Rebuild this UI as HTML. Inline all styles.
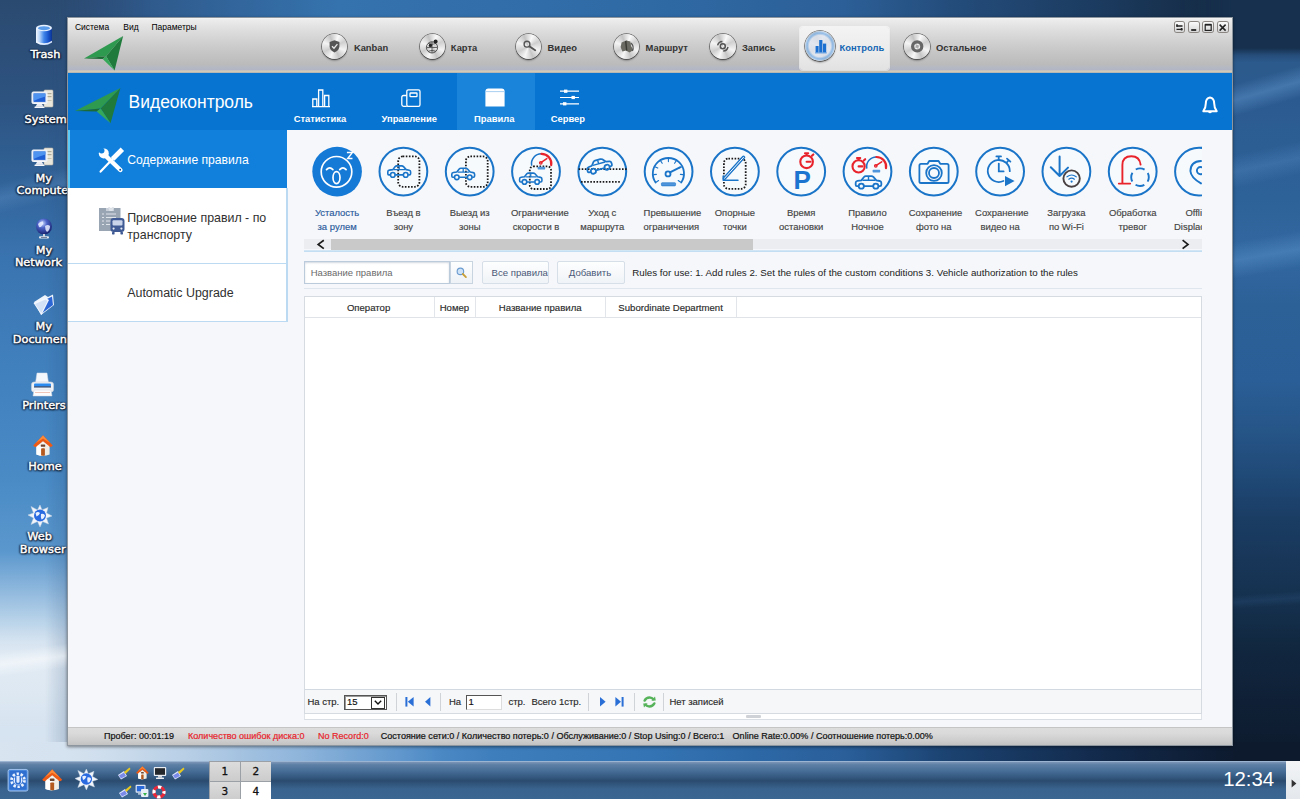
<!DOCTYPE html>
<html lang="ru"><head><meta charset="utf-8"><title>Видеоконтроль</title>
<style>
html,body{margin:0;padding:0;}
body{width:1300px;height:799px;overflow:hidden;position:relative;background:#2f5f95;font-family:"Liberation Sans",sans-serif;}
.a{position:absolute;}
.t{position:absolute;white-space:nowrap;}
svg{position:absolute;overflow:visible;}
.dl{position:absolute;white-space:nowrap;text-align:center;color:#fff;font-family:"DejaVu Sans",sans-serif;font-size:12px;line-height:13px;text-shadow:0 0 1.5px #101c30,0 0 2px #101c30,0 1px 2px #101c30,1px 1px 2px #101c30,-1px 0 2px #101c30;-webkit-text-stroke:0.45px #fff;}
.tb{position:absolute;width:26px;height:26px;border-radius:50%;background:radial-gradient(circle at 50% 45%,#f6f6f6 0%,#e2e2e2 35%,#c9c9c9 60%,#efefef 78%,#9d9d9d 100%);box-shadow:0 0 0 1px #8c8c8c,0 2px 2px rgba(0,0,0,.35);}
.tbt{position:absolute;white-space:nowrap;font-weight:bold;color:#333;font-size:9.4px;line-height:12px;}
.il{position:absolute;width:80px;text-align:center;font-size:9.45px;line-height:14px;color:#444;white-space:nowrap;-webkit-text-stroke:0.15px currentColor;}
.ic{position:absolute;width:46px;height:46px;border-radius:50%;border:2px solid #1670c4;background:#f6f9fc;box-sizing:content-box;}
.st{position:absolute;white-space:nowrap;font-size:9.04px;line-height:12px;color:#111;top:729.8px;-webkit-text-stroke:0.2px currentColor;}
.pg{position:absolute;white-space:nowrap;font-size:9.5px;line-height:12px;color:#2a2a2a;top:696.3px;-webkit-text-stroke:0.15px currentColor;}
.sep{position:absolute;width:1px;background:#d0d4d8;top:693px;height:18px;}
.th{position:absolute;white-space:nowrap;font-size:9.6px;line-height:12px;color:#2a2a2a;top:302px;text-align:center;-webkit-text-stroke:0.15px currentColor;}
</style></head><body>
<div class="a" style="left:0;top:0;width:1300px;height:799px;background:linear-gradient(90deg,#2a4870 0%,#2e5484 8%,#3573ae 26%,#2f6aa5 50%,#2c5f97 65%,#244d7c 73%,#1b3a5e 85%,#14283f 95%,#12233a 100%);"></div>
<div class="a" style="left:0;top:0;width:150px;height:762px;-webkit-mask-image:linear-gradient(90deg,#000 0,#000 45px,transparent 150px);mask-image:linear-gradient(90deg,#000 0,#000 45px,transparent 150px);background:linear-gradient(180deg,#2b4a70 0%,#2d5380 13%,#316399 24%,#3a74b0 34%,#4080bd 48%,#4a8bc6 63%,#5a97cd 72.3%,#8ab5dc 77%,#bcd5ea 81.8%,#d5e3f0 84.1%,#e2ebf4 86.4%,#dde8f2 91%,#d6e3f0 95.8%,#d8e4f0 100%);"></div>
<div class="a" style="left:1180px;top:0;width:120px;height:762px;-webkit-mask-image:linear-gradient(90deg,transparent 0,#000 52px,#000 120px);mask-image:linear-gradient(90deg,transparent 0,#000 52px,#000 120px);background:linear-gradient(180deg,#16304e 0%,#16304e 6.3%,#264e7c 7.3%,#2c5a8c 8.2%,#2b5a90 13%,#2d6298 26%,#3268a0 33%,#2c6198 40%,#2a5e96 50%,#265588 56.4%,#1f4875 63%,#1a3d64 68%,#183658 73.5%,#15314f 78.7%,#11273f 85%,#0f2036 92%,#0d1a2c 100%);"></div>
<div class="a" style="left:0;top:742px;width:1300px;height:20px;background:linear-gradient(90deg,#d8e4f0 0%,#d5e2ef 5%,#cfdeed 8%,#b5cde5 15%,#8fb5db 23%,#5f96cc 31%,#4a88c4 34%,#3f7ebc 38%,#3474b4 50%,#2d68a6 58%,#2a5f9a 65%,#1b4270 73%,#12294a 85%,#0d1a2e 95%,#0d1a2e 100%);"></div>

<div class="a" style="left:1232px;top:58px;width:68px;height:70px;background:linear-gradient(164deg,rgba(110,165,220,0) 30%,rgba(110,165,220,.38) 48%,rgba(110,165,220,0) 66%);"></div>
<div class="a" style="left:1232px;top:130px;width:68px;height:70px;background:linear-gradient(168deg,rgba(110,165,220,0) 30%,rgba(110,165,220,.22) 50%,rgba(110,165,220,0) 70%);"></div>
<div class="a" style="left:1232px;top:215px;width:68px;height:80px;background:linear-gradient(170deg,rgba(110,165,220,0) 30%,rgba(110,165,220,.32) 50%,rgba(110,165,220,0) 70%);"></div>
<div class="a" style="left:1232px;top:585px;width:68px;height:30px;background:linear-gradient(176deg,rgba(70,120,180,0) 30%,rgba(70,120,180,.14) 50%,rgba(70,120,180,0) 70%);"></div>
<div class="a" style="left:0;top:640px;width:68px;height:40px;background:linear-gradient(172deg,rgba(255,255,255,0) 25%,rgba(255,255,255,.45) 50%,rgba(255,255,255,0) 75%);"></div>
<div class="a" style="left:0;top:160px;width:68px;height:60px;background:linear-gradient(166deg,rgba(120,170,220,0) 30%,rgba(120,170,220,.22) 50%,rgba(120,170,220,0) 70%);"></div>

<div class="dl" style="left:0.5px;width:90px;top:48.4px;font-size:11.3px;">Trash</div>
<div class="dl" style="left:0.7000000000000028px;width:90px;top:113.0px;font-size:11.3px;">System</div>
<div class="dl" style="left:-1.2999999999999972px;width:90px;top:172.2px;font-size:11.3px;">My</div>
<div class="dl" style="left:-0.29999999999999716px;width:90px;top:184.4px;font-size:11.3px;">Computer</div>
<div class="dl" style="left:-1.0px;width:90px;top:243.5px;font-size:11.3px;">My</div>
<div class="dl" style="left:-6.5px;width:90px;top:255.7px;font-size:11.3px;">Network</div>
<div class="dl" style="left:-1.2000000000000028px;width:90px;top:319.9px;font-size:11.3px;">My</div>
<div class="dl" style="left:0.0px;width:90px;top:332.5px;font-size:11.3px;">Documents</div>
<div class="dl" style="left:-1.1000000000000014px;width:90px;top:398.8px;font-size:11.3px;">Printers</div>
<div class="dl" style="left:0.0px;width:90px;top:460.3px;font-size:11.3px;">Home</div>
<div class="dl" style="left:-5.399999999999999px;width:90px;top:529.8px;font-size:11.3px;">Web</div>
<div class="dl" style="left:-2.299999999999997px;width:90px;top:542.6px;font-size:11.3px;">Browser</div>
<svg style="left:34.5px;top:23.5px" width="18" height="23" viewBox="0 0 18 23">
<defs><linearGradient id="tr1" x1="0" x2="1"><stop offset="0" stop-color="#f4f9ff"/><stop offset=".22" stop-color="#b9d6fb"/><stop offset=".5" stop-color="#3f84ea"/><stop offset=".8" stop-color="#1650c8"/><stop offset="1" stop-color="#0c3490"/></linearGradient></defs>
<path d="M1 4 V18.5 Q9 23.5 17 18.5 V4 Z" fill="url(#tr1)"/>
<ellipse cx="9" cy="4" rx="8" ry="3.2" fill="#e8f2ff"/>
<ellipse cx="9" cy="4.2" rx="6" ry="2" fill="#5a9cea"/>
<path d="M1 16.8 Q9 21.8 17 16.8 V18.6 Q9 23.6 1 18.6 Z" fill="#f0f6ff" opacity=".9"/>
</svg>
<svg style="left:31px;top:89px" width="24" height="20" viewBox="0 0 24 20">
<rect x="13" y="1" width="9" height="17" rx="1" fill="#e9e6dc" stroke="#b9b4a4" stroke-width=".6"/>
<rect x="14.5" y="4" width="6" height="1.2" fill="#b0aa98"/><rect x="14.5" y="7" width="6" height="1.2" fill="#b0aa98"/><rect x="14.5" y="11" width="6" height="1" fill="#c8c2b0"/>
<rect x="1" y="3" width="15" height="11.5" rx="1.2" fill="#dfe6f2" stroke="#f6f8fc" stroke-width="1"/>
<rect x="2.6" y="4.5" width="11.8" height="8.4" fill="#1f5fd6"/>
<path d="M2.6 4.5 h11.8 v3 Q8 9 2.6 12 Z" fill="#4f93f0"/>
<path d="M6 15 h5 l1.5 2.8 h-8 Z" fill="#e8ecf2"/>
<rect x="3.5" y="17.6" width="10" height="1.4" rx=".6" fill="#f4f6fa"/>
</svg>
<svg style="left:30.5px;top:147px" width="24" height="20" viewBox="0 0 24 20">
<rect x="13" y="1" width="9" height="17" rx="1" fill="#e9e6dc" stroke="#b9b4a4" stroke-width=".6"/>
<rect x="14.5" y="4" width="6" height="1.2" fill="#b0aa98"/><rect x="14.5" y="7" width="6" height="1.2" fill="#b0aa98"/><rect x="14.5" y="11" width="6" height="1" fill="#c8c2b0"/>
<rect x="1" y="3" width="15" height="11.5" rx="1.2" fill="#dfe6f2" stroke="#f6f8fc" stroke-width="1"/>
<rect x="2.6" y="4.5" width="11.8" height="8.4" fill="#1f5fd6"/>
<path d="M2.6 4.5 h11.8 v3 Q8 9 2.6 12 Z" fill="#4f93f0"/>
<path d="M6 15 h5 l1.5 2.8 h-8 Z" fill="#e8ecf2"/>
<rect x="3.5" y="17.6" width="10" height="1.4" rx=".6" fill="#f4f6fa"/>
</svg>
<svg style="left:34px;top:218px" width="20" height="22" viewBox="0 0 20 22">
<defs><radialGradient id="gl1" cx=".4" cy=".3" r=".8"><stop offset="0" stop-color="#c8d8ff"/><stop offset=".35" stop-color="#4b63c8"/><stop offset="1" stop-color="#10185e"/></radialGradient></defs>
<circle cx="10" cy="8.5" r="8" fill="url(#gl1)"/>
<path d="M4 6 Q6 3 9 3.5 Q10 6 8 7.5 Q7 10 5 9 Z M11 8 Q14 6 16 8 Q16 12 13 14 Q11 12 11 8 Z" fill="#e6ecff" opacity=".85"/>
<rect x="9" y="16" width="2" height="2.5" fill="#d0d4dc"/><rect x="5" y="18.3" width="10" height="2.2" rx="1" fill="#e4e8ee"/><rect x="7" y="19" width="6" height=".8" fill="#5a6a8a"/>
</svg>
<svg style="left:32px;top:293px" width="24" height="24" viewBox="0 0 24 24">
<path d="M2 9 L13 2 L16 4 L21 1.5 L22 12 L9 22 Z" fill="#eef4fc"/>
<path d="M5 11 L20 3.5 L21 12 L9 21 Z" fill="#2b66d4"/>
<path d="M1.5 10 L14 5 L17 7 L9.5 22 Z" fill="#f4f8fe"/>
<path d="M3 11 L13.5 6.5 L15.5 8 L9.3 20 Z" fill="#d3e2f6"/>
</svg>
<svg style="left:30px;top:372px" width="25" height="26" viewBox="0 0 25 26">
<path d="M7 1 h10 l1.5 10 h-13 Z" fill="#f4f7fb" stroke="#d5dde8" stroke-width=".5"/>
<rect x="1.5" y="10" width="22" height="10" rx="2.5" fill="#eef1f5" stroke="#c9d0da" stroke-width=".6"/>
<rect x="4" y="11.5" width="17" height="3" rx="1" fill="#2a8af0"/>
<rect x="4" y="14.3" width="17" height="1.2" fill="#203a66"/>
<path d="M4 18 h17 l1 6 h-19 Z" fill="#fbfcfe" stroke="#d0d6e0" stroke-width=".5"/>
<rect x="5" y="20" width="15" height="1" fill="#e9a08a" opacity=".6"/>
</svg>
<svg style="left:33px;top:434.5px" width="20.0" height="22.0" viewBox="0 0 20 22">
<path d="M3.4 10 H16.6 V19.6 Q10 22 3.4 19.6 Z" fill="#f1eee6"/>
<path d="M3.4 10 H10 V21 Q6 20.8 3.4 19.6 Z" fill="#ffffff"/>
<path d="M10 0.3 L19.8 10.6 Q18.6 12.4 16.8 11.8 L10 6.4 L3.2 11.8 Q1.4 12.4 0.2 10.6 Z" fill="#ee5a14"/>
<path d="M10 0.6 L17 8 L10 3.6 L3 8 Z" fill="#fa8c3c"/>
<path d="M10 6.2 L15.6 10.8 H4.4 Z" fill="#f6f3ec"/>
<rect x="8.1" y="13.2" width="3.8" height="7.6" rx=".8" fill="#b45a1e"/>
<rect x="7.8" y="9.4" width="4.4" height="2.4" rx=".6" fill="#6e4630"/>
</svg>
<svg style="left:27.5px;top:504.5px" width="24.0" height="22.0" viewBox="0 0 24 22">
<path d="M12 0 L14 5 L20 2.5 L18.5 8 L24 11 L18.5 13 L20.5 19 L14.5 16.5 L12 22 L9.5 16.5 L3 19.5 L5.5 13 L0 10 L5.5 8 L3 1.5 L9.5 5 Z" fill="#f2f6fb" stroke="#c6d2e2" stroke-width=".5"/>
<circle cx="12" cy="10.5" r="6" fill="#2a6ae0"/>
<path d="M7.5 8 Q10 6 12 8 Q11 11 8.5 11.5 Z M13 9 Q16 8 17 10.5 Q16 14 13.5 14.5 Q12.5 12 13 9 Z" fill="#e8f0ff"/>
</svg>
<div class="a" style="left:67px;top:17px;width:1166px;height:729px;background:#8d959e;box-shadow:0 1px 3px rgba(0,0,0,.45);"></div>
<div class="a" style="left:68px;top:18px;width:1164px;height:727px;background:#f5f7fa;"></div>
<div class="a" style="left:68px;top:18px;width:1164px;height:55px;background:linear-gradient(180deg,#f6f6f6 0%,#ececec 3.5%,#e6e6e6 11%,#dedede 22%,#d0d0d0 44%,#c6c6c6 62%,#bbbbbb 84%,#b6b9c2 89%,#b2b6c4 94%,#d4cbb9 96.5%,#cfc6b4 98.5%,#8fa0b8 100%);"></div>
<div class="t" style="left:74.9px;top:21.90px;font-size:8.5px;line-height:11px;color:#000;font-weight:normal;font-family:"Liberation Sans", sans-serif;">Система</div>
<div class="t" style="left:123.3px;top:21.90px;font-size:8.5px;line-height:11px;color:#000;font-weight:normal;font-family:"Liberation Sans", sans-serif;">Вид</div>
<div class="t" style="left:151.4px;top:21.90px;font-size:8.5px;line-height:11px;color:#000;font-weight:normal;font-family:"Liberation Sans", sans-serif;">Параметры</div>
<svg style="left:84.3px;top:35.8px" width="39.1" height="34.5" viewBox="0 0 46 36" preserveAspectRatio="none">
<path d="M46 0 L0 23.5 L26 21 Z" fill="#2e9a50"/>
<path d="M46 0 L26 21 L36 36 Z" fill="#1f7a3c"/>
<path d="M0 23.5 L26 21 L22 24 Z" fill="#1c6a34"/>
<path d="M26 21 L36 36 L22 24 Z" fill="#35a85a"/>
</svg>
<div class="a" style="left:799.5px;top:26.5px;width:89.5px;height:43px;border-radius:3px;background:linear-gradient(180deg,#f3f3f3,#ebebeb 60%,#e2e2e2);box-shadow:0 0 0 1px rgba(255,255,255,.6),0 1px 2px rgba(0,0,0,.18);"></div>
<div class="a" style="left:321.7px;top:33.7px;width:25.6px;height:25.6px;border-radius:50%;background:radial-gradient(circle at 50% 50%,rgba(255,255,255,.0) 0%,rgba(255,255,255,0) 70%,rgba(255,255,255,.85) 80%,rgba(150,150,150,.9) 93%,rgba(110,110,110,1) 100%),conic-gradient(from 20deg,#fafafa,#cfcfcf 12%,#f4f4f4 25%,#c6c6c6 38%,#f7f7f7 50%,#cdcdcd 62%,#f4f4f4 75%,#c4c4c4 88%,#fafafa);box-shadow:0 1.5px 2px rgba(0,0,0,.4),0 0 0 .7px rgba(90,90,90,.9);"></div>
<div class="tbt" style="left:353.9px;top:41.8px;">Kanban</div>
<div class="a" style="left:419.7px;top:33.7px;width:25.6px;height:25.6px;border-radius:50%;background:radial-gradient(circle at 50% 50%,rgba(255,255,255,.0) 0%,rgba(255,255,255,0) 70%,rgba(255,255,255,.85) 80%,rgba(150,150,150,.9) 93%,rgba(110,110,110,1) 100%),conic-gradient(from 20deg,#fafafa,#cfcfcf 12%,#f4f4f4 25%,#c6c6c6 38%,#f7f7f7 50%,#cdcdcd 62%,#f4f4f4 75%,#c4c4c4 88%,#fafafa);box-shadow:0 1.5px 2px rgba(0,0,0,.4),0 0 0 .7px rgba(90,90,90,.9);"></div>
<div class="tbt" style="left:450.8px;top:41.8px;">Карта</div>
<div class="a" style="left:515.9000000000001px;top:33.7px;width:25.6px;height:25.6px;border-radius:50%;background:radial-gradient(circle at 50% 50%,rgba(255,255,255,.0) 0%,rgba(255,255,255,0) 70%,rgba(255,255,255,.85) 80%,rgba(150,150,150,.9) 93%,rgba(110,110,110,1) 100%),conic-gradient(from 20deg,#fafafa,#cfcfcf 12%,#f4f4f4 25%,#c6c6c6 38%,#f7f7f7 50%,#cdcdcd 62%,#f4f4f4 75%,#c4c4c4 88%,#fafafa);box-shadow:0 1.5px 2px rgba(0,0,0,.4),0 0 0 .7px rgba(90,90,90,.9);"></div>
<div class="tbt" style="left:547.6px;top:41.8px;">Видео</div>
<div class="a" style="left:613.8000000000001px;top:33.7px;width:25.6px;height:25.6px;border-radius:50%;background:radial-gradient(circle at 50% 50%,rgba(255,255,255,.0) 0%,rgba(255,255,255,0) 70%,rgba(255,255,255,.85) 80%,rgba(150,150,150,.9) 93%,rgba(110,110,110,1) 100%),conic-gradient(from 20deg,#fafafa,#cfcfcf 12%,#f4f4f4 25%,#c6c6c6 38%,#f7f7f7 50%,#cdcdcd 62%,#f4f4f4 75%,#c4c4c4 88%,#fafafa);box-shadow:0 1.5px 2px rgba(0,0,0,.4),0 0 0 .7px rgba(90,90,90,.9);"></div>
<div class="tbt" style="left:645.6px;top:41.8px;">Маршрут</div>
<div class="a" style="left:710.2px;top:33.7px;width:25.6px;height:25.6px;border-radius:50%;background:radial-gradient(circle at 50% 50%,rgba(255,255,255,.0) 0%,rgba(255,255,255,0) 70%,rgba(255,255,255,.85) 80%,rgba(150,150,150,.9) 93%,rgba(110,110,110,1) 100%),conic-gradient(from 20deg,#fafafa,#cfcfcf 12%,#f4f4f4 25%,#c6c6c6 38%,#f7f7f7 50%,#cdcdcd 62%,#f4f4f4 75%,#c4c4c4 88%,#fafafa);box-shadow:0 1.5px 2px rgba(0,0,0,.4),0 0 0 .7px rgba(90,90,90,.9);"></div>
<div class="tbt" style="left:742px;top:41.8px;">Запись</div>
<div class="a" style="left:904.4000000000001px;top:33.7px;width:25.6px;height:25.6px;border-radius:50%;background:radial-gradient(circle at 50% 50%,rgba(255,255,255,.0) 0%,rgba(255,255,255,0) 70%,rgba(255,255,255,.85) 80%,rgba(150,150,150,.9) 93%,rgba(110,110,110,1) 100%),conic-gradient(from 20deg,#fafafa,#cfcfcf 12%,#f4f4f4 25%,#c6c6c6 38%,#f7f7f7 50%,#cdcdcd 62%,#f4f4f4 75%,#c4c4c4 88%,#fafafa);box-shadow:0 1.5px 2px rgba(0,0,0,.4),0 0 0 .7px rgba(90,90,90,.9);"></div>
<div class="tbt" style="left:936px;top:41.8px;">Остальное</div>
<div class="a" style="left:804.6999999999999px;top:30.599999999999998px;width:30.4px;height:30.4px;border-radius:50%;background:radial-gradient(circle at 50% 50%,rgba(255,255,255,.0) 0%,rgba(255,255,255,0) 72%,rgba(255,255,255,.85) 82%,rgba(150,150,150,.9) 93%,rgba(110,110,110,1) 100%),radial-gradient(circle at 50% 50%,rgba(222,228,238,.85) 0%,rgba(222,228,238,.8) 50%,rgba(130,178,228,.85) 60%,rgba(130,178,228,.6) 66%,rgba(130,178,228,0) 74%),conic-gradient(from 20deg,#fafafa,#cfcfcf 12%,#f4f4f4 25%,#c6c6c6 38%,#f7f7f7 50%,#cdcdcd 62%,#f4f4f4 75%,#c4c4c4 88%,#fafafa);box-shadow:0 1.5px 2px rgba(0,0,0,.4),0 0 0 .7px rgba(90,90,90,.9);"></div>
<div class="tbt" style="left:839.5px;top:41.8px;color:#1466b4;">Контроль</div>
<svg style="left:0;top:0" width="1300" height="80" viewBox="0 0 1300 80">
<path d="M334.5 40.2 L339.4 42 V46.6 Q339.2 50.4 334.5 52.6 Q329.8 50.4 329.6 46.6 V42 Z" fill="#555"/><path d="M332 46.2 L334 48.2 L337.4 44.2" fill="none" stroke="#e8e8e8" stroke-width="1.3"/>
<g fill="none" stroke="#555" stroke-width="1"><circle cx="432" cy="47.4" r="5.6"/><path d="M426.4 47.4 H437.6 M432 41.8 V53 M428 43.4 Q432 45.4 436 43.4 M428 51.4 Q432 49.4 436 51.4"/></g><circle cx="435.6" cy="41.6" r="2" fill="#222"/><circle cx="430.4" cy="45.4" r="1.7" fill="#222"/>
<g fill="none" stroke="#555"><circle cx="527" cy="44.2" r="2.9" stroke-width="1.4"/><path d="M529.4 46.4 L535.2 50.2" stroke-width="1.9" stroke-linecap="round"/></g>
<path d="M621.6 42.4 L626.4 40.6 L630.4 41.6 L631 46 L633.4 50 L629.6 52.4 L626 50.6 L622.4 51.6 L620.6 47 Z" fill="#6a6a62"/><path d="M626.4 40.6 L627.4 50.8 L626 50.6 L625 41.2Z" fill="#3a3a34"/><path d="M630.8 43 Q634.6 46 632.4 51" fill="none" stroke="#555" stroke-width="1.2"/>
<g fill="none" stroke="#555" stroke-width="1.5"><circle cx="722.8" cy="46.2" r="2.5"/><path d="M717.6 45.4 Q718.6 41.4 722.4 41.4 M728 47 Q727 51 723.2 51"/></g>
<g fill="#1a6fd0"><rect x="815.6" y="46" width="3" height="6.6"/><rect x="819.2" y="40" width="3.2" height="12.6"/><rect x="823" y="43.6" width="3.2" height="9"/></g><rect x="815" y="52.4" width="11.8" height="1" fill="#5a9ae0"/>
<circle cx="917.2" cy="46.4" r="4.6" fill="none" stroke="#666" stroke-width="3.2"/><circle cx="917.2" cy="46.4" r="1.6" fill="#aaa"/>
</svg>
<div class="a" style="left:1174.6px;top:22px;width:9.8px;height:10px;border-radius:2px;background:linear-gradient(180deg,#fafafa,#d6d6d6);box-shadow:0 0 0 1px #8a8580;"></div>
<div class="a" style="left:1188.9px;top:22px;width:9.8px;height:10px;border-radius:2px;background:linear-gradient(180deg,#fafafa,#d6d6d6);box-shadow:0 0 0 1px #8a8580;"></div>
<div class="a" style="left:1203.3px;top:22px;width:9.8px;height:10px;border-radius:2px;background:linear-gradient(180deg,#fafafa,#d6d6d6);box-shadow:0 0 0 1px #8a8580;"></div>
<div class="a" style="left:1217.8px;top:22px;width:9.8px;height:10px;border-radius:2px;background:linear-gradient(180deg,#fafafa,#d6d6d6);box-shadow:0 0 0 1px #8a8580;"></div>
<svg style="left:1174px;top:21.5px" width="55" height="11" viewBox="0 0 55 11">
<g stroke="#222" stroke-width="1.3" fill="none">
<path d="M2.5 4 h6 M2.5 7.3 h6"/><path d="M3 2.2 v2.5 M7.6 6 v2.6" stroke-width="1.6"/>
<path d="M17.2 8 h5" stroke-width="1.8"/>
<rect x="31.2" y="2.8" width="6" height="5.6" stroke-width="1.2"/><path d="M31 2.6 h6.4" stroke-width="1.6"/>
<path d="M45.6 2.6 L51.6 8.6 M51.6 2.6 L45.6 8.6" stroke-width="1.5"/>
</g></svg>
<div class="a" style="left:68px;top:73px;width:1164px;height:57px;background:#0874d1;"></div>
<div class="a" style="left:456.5px;top:73px;width:78px;height:57px;background:#1a83da;"></div>
<svg style="left:74.9px;top:87.5px" width="45.4" height="35.2" viewBox="0 0 46 36" preserveAspectRatio="none">
<path d="M46 0 L0 23.5 L26 21 Z" fill="#2e9a50"/>
<path d="M46 0 L26 21 L36 36 Z" fill="#1f7a3c"/>
<path d="M0 23.5 L26 21 L22 24 Z" fill="#1c6a34"/>
<path d="M26 21 L36 36 L22 24 Z" fill="#35a85a"/>
</svg>
<div class="t" style="left:128.6px;top:90.70px;font-size:17.45px;line-height:23px;color:#fff;font-weight:normal;font-family:"Liberation Sans", sans-serif;-webkit-text-stroke:0.65px #fff;">Видеоконтроль</div>
<div class="t" style="left:293.7px;top:112.60px;font-size:9.4px;line-height:12px;color:#fff;font-weight:bold;font-family:"Liberation Sans", sans-serif;">Статистика</div>
<div class="t" style="left:381.5px;top:112.60px;font-size:9.4px;line-height:12px;color:#fff;font-weight:bold;font-family:"Liberation Sans", sans-serif;">Управление</div>
<div class="t" style="left:474px;top:112.60px;font-size:9.4px;line-height:12px;color:#fff;font-weight:bold;font-family:"Liberation Sans", sans-serif;">Правила</div>
<div class="t" style="left:550.7px;top:112.60px;font-size:9.4px;line-height:12px;color:#fff;font-weight:bold;font-family:"Liberation Sans", sans-serif;">Сервер</div>
<svg style="left:311.5px;top:88.5px" width="18" height="18.5" viewBox="0 0 18 18.5"><g fill="none" stroke="#fff" stroke-width="1.3">
<path d="M0.8 17.6 V10 H4.8 V17.6 M6.6 17.6 V1 H10.8 V17.6 M12.6 17.6 V6.5 H16.8 V17.6 M0 17.7 H18"/></g></svg>
<svg style="left:400.5px;top:88.5px" width="20" height="18.5" viewBox="0 0 20 18.5"><g fill="none" stroke="#fff" stroke-width="1.3">
<rect x="5.8" y="0.8" width="13.2" height="16.6" rx="1.6"/><rect x="9" y="4" width="7" height="3.6" rx=".6"/>
<path d="M5.8 6.5 H2.6 Q.8 6.5 .8 8.3 V15.6 Q.8 17.4 2.6 17.4 H5.8"/></g></svg>
<svg style="left:485px;top:88px" width="20" height="19" viewBox="0 0 20 19">
<path d="M0.4 3.8 Q0.4 0.6 3.4 0.6 H16.6 Q19.6 0.6 19.6 3.8 V18.6 H0.4 Z" fill="#fff"/><path d="M0.4 3.6 H19.6" stroke="#9fcaf0" stroke-width=".9"/></svg>
<svg style="left:559.5px;top:89px" width="19" height="17" viewBox="0 0 19 17"><g fill="none" stroke="#fff" stroke-width="1.2">
<path d="M0 2.2 H19 M0 8.5 H19 M0 14.8 H19"/></g><g fill="#fff"><rect x="4" y="0.6" width="3.4" height="3.2"/><rect x="11.5" y="6.9" width="3.4" height="3.2"/><rect x="3" y="13.2" width="3.4" height="3.2"/></g></svg>
<svg style="left:1201.5px;top:96px" width="16" height="18.5" viewBox="0 0 16 18.5"><g fill="none" stroke="#fff" stroke-width="2" stroke-linejoin="round">
<path d="M8 1.4 Q3.8 2.2 3.8 7.5 Q3.8 12 1.3 15.2 H14.7 Q12.2 12 12.2 7.5 Q12.2 2.2 8 1.4 Z"/></g><path d="M6 16 Q8 18.6 10 16 Z" fill="#fff"/></svg>
<div class="a" style="left:68px;top:130px;width:218.8px;height:191.5px;background:#fff;"></div>
<div class="a" style="left:68px;top:130px;width:218.8px;height:58px;background:#1180dd;"></div>
<div class="a" style="left:68px;top:130px;width:2.4px;height:58px;background:#5ccaf6;"></div>
<div class="a" style="left:68px;top:263.3px;width:218.8px;height:1px;background:#bcdaf1;"></div>
<div class="a" style="left:68px;top:321px;width:219.3px;height:1px;background:#bcdaf1;"></div>
<div class="a" style="left:286px;top:188px;width:1.8px;height:134px;background:#bcdaf2;"></div>
<div class="t" style="left:127.2px;top:151.50px;font-size:12.15px;line-height:16px;color:#fff;font-weight:normal;font-family:"Liberation Sans", sans-serif;">Содержание правила</div>
<div class="t" style="left:127.2px;top:209.90px;font-size:12.4px;line-height:16px;color:#303030;font-weight:normal;font-family:"Liberation Sans", sans-serif;">Присвоение правил - по</div>
<div class="t" style="left:127.2px;top:227.40px;font-size:12.4px;line-height:16px;color:#303030;font-weight:normal;font-family:"Liberation Sans", sans-serif;">транспорту</div>
<div class="t" style="left:127.2px;top:285.10px;font-size:12.45px;line-height:16px;color:#303030;font-weight:normal;font-family:"Liberation Sans", sans-serif;">Automatic Upgrade</div>
<svg style="left:98px;top:146.5px" width="26.5" height="26.5" viewBox="0 0 26.5 26.5">
<g stroke="#fff" fill="none">
<path d="M24.4 2.2 L14.6 12" stroke-width="4.8"/>
<path d="M15 11.6 L2.6 24.6" stroke-width="2.2" stroke-linecap="round"/>
<path d="M8 9.2 L22.4 23" stroke-width="4.4" stroke-linecap="round"/>
</g>
<circle cx="5.8" cy="6.4" r="5" fill="#fff"/>
<circle cx="3.6" cy="3.6" r="2.9" fill="#1180dd"/>
<circle cx="22.2" cy="22.8" r="0.95" fill="#0b4f96"/>
</svg>
<svg style="left:98.5px;top:206.5px" width="26" height="28" viewBox="0 0 26 28">
<rect x="0" y="1" width="21.5" height="23" fill="#9aa5b4"/>
<path d="M7 1 h8 v3 h-8 Z" fill="#c9d0da"/><path d="M9 0 l2-0 1 2 1-2 2 0 -1.5 4 h-3 Z" fill="#dfe4ea"/>
<g stroke="#dfe4ea" stroke-width="1"><path d="M3 7 h2 M7 7 h10 M3 10.5 h2 M7 10.5 h10 M3 14 h2 M7 14 h5 M3 17.5 h2 M7 17.5 h4"/></g>
<rect x="11.5" y="11" width="14" height="14" rx="3" fill="#3f5a94"/>
<rect x="13.5" y="13.2" width="10" height="5.2" rx="1" fill="#c9d3ea"/>
<circle cx="14.6" cy="21.6" r="1.1" fill="#e6ebf6"/><circle cx="22.4" cy="21.6" r="1.1" fill="#e6ebf6"/>
<rect x="13" y="25" width="2.6" height="2.4" rx=".6" fill="#3f5a94"/><rect x="21.4" y="25" width="2.6" height="2.4" rx=".6" fill="#3f5a94"/>
</svg>
<div class="a" style="left:304px;top:140px;width:897.6px;height:113px;overflow:hidden;">
<svg style="left:0;top:0" width="898" height="112" viewBox="304 140 898 112">
<circle cx="337.1" cy="171.6" r="24.8" fill="#1579d6"/>
<circle cx="403.40000000000003" cy="171.6" r="23.9" fill="#f7fafd" stroke="#1a74c8" stroke-width="2"/>
<circle cx="469.70000000000005" cy="171.6" r="23.9" fill="#f7fafd" stroke="#1a74c8" stroke-width="2"/>
<circle cx="536.0" cy="171.6" r="23.9" fill="#f7fafd" stroke="#1a74c8" stroke-width="2"/>
<circle cx="602.3" cy="171.6" r="23.9" fill="#f7fafd" stroke="#1a74c8" stroke-width="2"/>
<circle cx="668.6" cy="171.6" r="23.9" fill="#f7fafd" stroke="#1a74c8" stroke-width="2"/>
<circle cx="734.9" cy="171.6" r="23.9" fill="#f7fafd" stroke="#1a74c8" stroke-width="2"/>
<circle cx="801.2" cy="171.6" r="23.9" fill="#f7fafd" stroke="#1a74c8" stroke-width="2"/>
<circle cx="867.5" cy="171.6" r="23.9" fill="#f7fafd" stroke="#1a74c8" stroke-width="2"/>
<circle cx="933.8" cy="171.6" r="23.9" fill="#f7fafd" stroke="#1a74c8" stroke-width="2"/>
<circle cx="1000.1" cy="171.6" r="23.9" fill="#f7fafd" stroke="#1a74c8" stroke-width="2"/>
<circle cx="1066.4" cy="171.6" r="23.9" fill="#f7fafd" stroke="#1a74c8" stroke-width="2"/>
<circle cx="1132.6999999999998" cy="171.6" r="23.9" fill="#f7fafd" stroke="#1a74c8" stroke-width="2"/>
<circle cx="1199.0" cy="171.6" r="23.9" fill="#f7fafd" stroke="#1a74c8" stroke-width="2"/>
<g fill="none" stroke="#fff" stroke-width="1.7" stroke-linecap="round"><circle cx="336.5" cy="171.8" r="15.3"/>
<path d="M326.5 169.6 q3.2 -3.6 6.4 0 M339.70000000000005 169.6 q3.2 -3.6 6.4 0"/><ellipse cx="336.5" cy="177.6" rx="3.5" ry="6"/></g>
<path d="M346.90000000000003 152.6 h5.4 l-4.6 6 h4.8" fill="none" stroke="#fff" stroke-width="1.5"/>
<rect x="398.2" y="156.4" width="21.2" height="30.4" rx="4.5" fill="none" stroke="#1a1a1a" stroke-width="1.8" stroke-dasharray="1.6 1.5"/>
<g transform="translate(387.2 165.2) scale(1.0 1.008)" fill="none" stroke="#1a74c8" stroke-width="1.6" stroke-linejoin="round">
<path d="M3.2 9.6 H1.6 Q0.6 9.6 0.6 8.4 V6.6 Q0.6 5.2 2.2 4.9 L5.6 4.4 L8 1.4 Q8.6 0.7 9.6 0.7 H14.6 Q15.6 0.7 16.3 1.4 L19 4.4 L22 5 Q23.4 5.3 23.4 6.6 V8.4 Q23.4 9.6 22.2 9.6 H21 M8 9.6 H16"/>
<path d="M6.6 4.4 H18 M12 1 V4.4" stroke-width="1.2800000000000002"/>
<circle cx="5.6" cy="9.6" r="2.3"/><circle cx="18.5" cy="9.6" r="2.3"/></g>
<rect x="465.9" y="156.4" width="21.8" height="30.4" rx="4.5" fill="none" stroke="#1a1a1a" stroke-width="1.8" stroke-dasharray="1.6 1.5"/>
<g transform="translate(451.2 167.6) scale(1.0 1.008)" fill="none" stroke="#1a74c8" stroke-width="1.6" stroke-linejoin="round">
<path d="M3.2 9.6 H1.6 Q0.6 9.6 0.6 8.4 V6.6 Q0.6 5.2 2.2 4.9 L5.6 4.4 L8 1.4 Q8.6 0.7 9.6 0.7 H14.6 Q15.6 0.7 16.3 1.4 L19 4.4 L22 5 Q23.4 5.3 23.4 6.6 V8.4 Q23.4 9.6 22.2 9.6 H21 M8 9.6 H16"/>
<path d="M6.6 4.4 H18 M12 1 V4.4" stroke-width="1.2800000000000002"/>
<circle cx="5.6" cy="9.6" r="2.3"/><circle cx="18.5" cy="9.6" r="2.3"/></g>
<rect x="529.8" y="166.4" width="21.2" height="22.6" rx="3.5" fill="none" stroke="#1a1a1a" stroke-width="1.8" stroke-dasharray="1.6 1.5"/>
<g fill="none" stroke-width="1.5" stroke-linecap="round">
<path d="M531.6 165.1 A9.8 9.8 0 0 1 541.4 153.79999999999998" stroke="#1a74c8"/>
<path d="M541.4 153.79999999999998 A9.8 9.8 0 0 1 551.1999999999999 165.1" stroke="#e8232b" stroke-width="2.2"/>
<path d="M540.9 162.6 L546.79 158.7" stroke="#e8232b" stroke-width="1.6"/><circle cx="540.8" cy="162.79999999999998" r="1.3" stroke="#e8232b" stroke-width="1.2"/>
</g><rect x="537.6" y="166.79999999999998" width="7.6" height="2.6" rx=".6" fill="#4f95dc"/>
<g transform="translate(519 172.4) scale(0.9791666666666666 0.992)" fill="none" stroke="#1a74c8" stroke-width="1.6" stroke-linejoin="round">
<path d="M3.2 9.6 H1.6 Q0.6 9.6 0.6 8.4 V6.6 Q0.6 5.2 2.2 4.9 L5.6 4.4 L8 1.4 Q8.6 0.7 9.6 0.7 H14.6 Q15.6 0.7 16.3 1.4 L19 4.4 L22 5 Q23.4 5.3 23.4 6.6 V8.4 Q23.4 9.6 22.2 9.6 H21 M8 9.6 H16"/>
<path d="M6.6 4.4 H18 M12 1 V4.4" stroke-width="1.2800000000000002"/>
<circle cx="5.6" cy="9.6" r="2.3"/><circle cx="18.5" cy="9.6" r="2.3"/></g>
<path d="M578.6 169.2 H627 M581 181.9 H621" stroke="#1a1a1a" stroke-width="1.8" stroke-dasharray="1.6 1.5" fill="none"/>
<g transform="rotate(-16 599 166) translate(586 159) scale(1.1041666666666667 1.088)" fill="none" stroke="#1a74c8" stroke-width="1.6" stroke-linejoin="round">
<path d="M3.2 9.6 H1.6 Q0.6 9.6 0.6 8.4 V6.6 Q0.6 5.2 2.2 4.9 L5.6 4.4 L8 1.4 Q8.6 0.7 9.6 0.7 H14.6 Q15.6 0.7 16.3 1.4 L19 4.4 L22 5 Q23.4 5.3 23.4 6.6 V8.4 Q23.4 9.6 22.2 9.6 H21 M8 9.6 H16"/>
<path d="M6.6 4.4 H18 M12 1 V4.4" stroke-width="1.2800000000000002"/>
<circle cx="5.6" cy="9.6" r="2.3"/><circle cx="18.5" cy="9.6" r="2.3"/></g>
<g fill="none" stroke="#1a74c8" stroke-width="1.8" stroke-linecap="round"><path d="M655.6 182.5 A15.6 15.6 0 1 1 681.2 182.5"/>
<path d="M656.4 182.0 L658.6 180.5 M653.8 174.6 L656.4 174.4 M655.4 166.9 L657.8 168.1 M660.8 161.1 L662.2 163.3 M668.4 159.0 L668.4 161.6 M676.0 161.1 L674.6 163.3 M681.4 166.9 L679.0 168.1 M683.0 174.6 L680.4 174.4 M680.4 182.0 L678.2 180.5 " stroke-width="1.1"/><circle cx="668.0" cy="173.9" r="2.5"/><path d="M670.0 172.4 L680.4 167.2" stroke-width="2"/></g>
<rect x="661.4" y="182.7" width="14.2" height="3.2" rx=".8" fill="#4f95dc" stroke="#1a74c8" stroke-width=".6"/>
<rect x="723.9" y="158.6" width="21.8" height="30.2" rx="4.5" fill="none" stroke="#1a1a1a" stroke-width="1.8" stroke-dasharray="1.6 1.5"/>
<g fill="none" stroke="#1a74c8" stroke-linecap="round" stroke-linejoin="round"><path d="M743.6 157.2 L724.4 178.4" stroke-width="3.4"/><path d="M743.6 157.2 L724.4 178.4" stroke="#f7fafd" stroke-width="1"/><path d="M723.2 176 V180.2 H738" stroke-width="1.5"/></g>
<text x="793.4" y="188.8" font-family="Liberation Sans, sans-serif" font-weight="bold" font-size="26" fill="#1a74d0">P</text>
<g fill="none" stroke="#e8232b" stroke-width="2.1" stroke-linecap="round"><circle cx="806.6" cy="161.8" r="6.3"/>
<path d="M806.6 161.8 H810.506"/><path d="M805.0 153.3 h3.2 M806.6 153.5 v1.6 M811.955 155.815 l1.4 -1.4"/></g>
<g fill="none" stroke="#e8232b" stroke-width="2.1" stroke-linecap="round"><circle cx="858.6" cy="166.4" r="6.1"/>
<path d="M858.6 166.4 H862.3820000000001"/><path d="M857.0 158.10000000000002 h3.2 M858.6 158.3 v1.6 M863.785 160.60500000000002 l1.4 -1.4"/></g>
<g fill="none" stroke-width="1.5" stroke-linecap="round">
<path d="M866.8 168.1 A9.6 9.6 0 0 1 876.4 157.0" stroke="#1a74c8"/>
<path d="M876.4 157.0 A9.6 9.6 0 0 1 886.0 168.1" stroke="#e8232b" stroke-width="2.2"/>
<path d="M875.9 165.6 L881.68 161.79999999999998" stroke="#e8232b" stroke-width="1.6"/><circle cx="875.8" cy="165.79999999999998" r="1.3" stroke="#e8232b" stroke-width="1.2"/>
</g><rect x="872.6" y="169.79999999999998" width="7.6" height="2.6" rx=".6" fill="#4f95dc"/>
<g transform="translate(855 175.4) scale(1.125 1.12)" fill="none" stroke="#1a74c8" stroke-width="1.6" stroke-linejoin="round">
<path d="M3.2 9.6 H1.6 Q0.6 9.6 0.6 8.4 V6.6 Q0.6 5.2 2.2 4.9 L5.6 4.4 L8 1.4 Q8.6 0.7 9.6 0.7 H14.6 Q15.6 0.7 16.3 1.4 L19 4.4 L22 5 Q23.4 5.3 23.4 6.6 V8.4 Q23.4 9.6 22.2 9.6 H21 M8 9.6 H16"/>
<path d="M6.6 4.4 H18 M12 1 V4.4" stroke-width="1.2800000000000002"/>
<circle cx="5.6" cy="9.6" r="2.3"/><circle cx="18.5" cy="9.6" r="2.3"/></g>
<g fill="none" stroke="#1a74c8" stroke-width="1.8" stroke-linejoin="round"><path d="M921 163.8 H927.6 L929.2 161 H938.6 L940.2 163.8 H947 Q948.6 163.8 948.6 165.4 V181.4 Q948.6 183 947 183 H921 Q919.4 183 919.4 181.4 V165.4 Q919.4 163.8 921 163.8 Z"/>
<circle cx="934" cy="173" r="7.8"/><circle cx="934" cy="173" r="5"/></g>
<g fill="none" stroke="#1a74c8" stroke-width="1.8" stroke-linecap="round"><path d="M1003.4 181 A11 11 0 1 1 1009.8 171.2"/>
<path d="M998.8 163.6 V171.4 H1003.6"/><path d="M996.4 156.4 H1001 M998.7 156.6 V159.4 M1007 158.6 L1010.4 161.6 M1008.6 160.2 L1007 162.2"/></g>
<path d="M1005 176 L1014.6 181 L1005 186.2 Z" fill="#1a74c8"/>
<g fill="none" stroke="#1a74c8" stroke-width="2" stroke-linecap="round" stroke-linejoin="round"><path d="M1059.6 156.4 V176 M1050.8 167.2 L1059.6 176 L1068 167.6"/></g>
<circle cx="1071.6" cy="178.6" r="8.2" fill="#f7fafd" stroke="#4a4242" stroke-width="1.9"/>
<g fill="none" stroke="#1a74c8" stroke-width="1.2" stroke-linecap="round"><path d="M1067 176.8 Q1071.6 173.2 1076.2 176.8 M1068.8 179.2 Q1071.6 177 1074.4 179.2"/></g><circle cx="1071.6" cy="181.6" r="1.1" fill="#1a74c8"/>
<g fill="none" stroke="#e8232b" stroke-width="1.9" stroke-linecap="round"><path d="M1122.4 183.2 V165 Q1122.4 156.2 1131.4 156.2 Q1139.6 156.2 1140.6 164.6 M1118.8 183.6 H1130.2"/></g>
<circle cx="1140" cy="177.2" r="8.8" fill="none" stroke="#1a74c8" stroke-width="1.9" stroke-dasharray="9.2 4.6" stroke-dashoffset="4.6"/>
<g fill="none" stroke="#1a74c8" stroke-width="1.9" stroke-linecap="round"><circle cx="1200.5" cy="170.6" r="3.6"/><path d="M1201 161 Q1190.6 161.4 1190.4 171 Q1190.8 177.6 1201 183.4"/></g>
</svg>
<div class="il" style="left:-6.9px;top:66.2px;color:#2a5a9c;">Усталость</div>
<div class="il" style="left:-6.9px;top:80.4px;color:#2a5a9c;">за рулем</div>
<div class="il" style="left:59.4px;top:66.2px;color:#444;">Въезд в</div>
<div class="il" style="left:59.4px;top:80.4px;color:#444;">зону</div>
<div class="il" style="left:125.7px;top:66.2px;color:#444;">Выезд из</div>
<div class="il" style="left:125.7px;top:80.4px;color:#444;">зоны</div>
<div class="il" style="left:207.0px;top:66.2px;width:auto;text-align:left;color:#444;">Ограничение</div>
<div class="il" style="left:192.0px;top:80.4px;color:#444;">скорости в</div>
<div class="il" style="left:258.3px;top:66.2px;color:#444;">Уход с</div>
<div class="il" style="left:258.3px;top:80.4px;color:#444;">маршрута</div>
<div class="il" style="left:339.6px;top:66.2px;width:auto;text-align:left;color:#444;">Превышение</div>
<div class="il" style="left:339.6px;top:80.4px;width:auto;text-align:left;color:#444;">ограничения</div>
<div class="il" style="left:390.9px;top:66.2px;color:#444;">Опорные</div>
<div class="il" style="left:390.9px;top:80.4px;color:#444;">точки</div>
<div class="il" style="left:457.2px;top:66.2px;color:#444;">Время</div>
<div class="il" style="left:457.2px;top:80.4px;color:#444;">остановки</div>
<div class="il" style="left:523.5px;top:66.2px;color:#444;">Правило</div>
<div class="il" style="left:523.5px;top:80.4px;color:#444;">Ночное</div>
<div class="il" style="left:604.8px;top:66.2px;width:auto;text-align:left;color:#444;">Сохранение</div>
<div class="il" style="left:589.8px;top:80.4px;color:#444;">фото на</div>
<div class="il" style="left:671.1px;top:66.2px;width:auto;text-align:left;color:#444;">Сохранение</div>
<div class="il" style="left:656.1px;top:80.4px;color:#444;">видео на</div>
<div class="il" style="left:722.4px;top:66.2px;color:#444;">Загрузка</div>
<div class="il" style="left:722.4px;top:80.4px;color:#444;">по Wi-Fi</div>
<div class="il" style="left:788.7px;top:66.2px;color:#444;">Обработка</div>
<div class="il" style="left:788.7px;top:80.4px;color:#444;">тревог</div>
<div class="il" style="left:855.0px;top:66.2px;color:#444;">Offline</div>
<div class="il" style="left:870.0px;top:80.4px;width:auto;text-align:left;color:#444;">Displacement</div>
<div class="a" style="left:0;top:98.6px;width:898px;height:10.6px;background:#ecedf0;"></div>
<div class="a" style="left:27.30000000000001px;top:98.6px;width:422px;height:11.4px;background:#c9c9c9;"></div>
<svg style="left:0;top:0" width="898" height="112" viewBox="304 140 898 112"><g fill="none" stroke="#1a1a1a" stroke-width="1.7"><path d="M323.8 240.2 L318.2 244.4 L323.8 248.6"/><path d="M1182.6 240.2 L1188 244.4 L1182.6 248.6"/></g></svg>
<div class="a" style="left:0;top:110.30000000000001px;width:898px;height:2.2px;background:linear-gradient(180deg,#d9eaf6,#bcdaf0);"></div>
</div>
<div class="a" style="left:304px;top:260.5px;width:146px;height:23.5px;box-sizing:border-box;border:1px solid #bccbdb;background:#fff;box-shadow:inset 0 1px 2px rgba(120,140,170,.35);"></div>
<div class="t" style="left:310.7px;top:266.60px;font-size:9.49px;line-height:12px;color:#6a6a6a;font-weight:normal;font-family:"Liberation Sans", sans-serif;">Название правила</div>
<div class="a" style="left:449.5px;top:260.5px;width:23px;height:23.5px;box-sizing:border-box;border:1px solid #c8d4e0;background:linear-gradient(180deg,#fdfefe,#eef2f6);"></div>
<svg style="left:455.6px;top:266.6px" width="11.4" height="11.4" viewBox="0 0 14 14"><circle cx="5.4" cy="5.4" r="4" fill="#cfe3f8" stroke="#6a9bd0" stroke-width="1.4"/><path d="M8.4 8.6 L12.2 12.4" stroke="#c9a038" stroke-width="2.2" stroke-linecap="round"/></svg>
<div class="a" style="left:481.5px;top:260.5px;width:67.5px;height:23.5px;box-sizing:border-box;border:1px solid #d6dee8;border-radius:2px;background:linear-gradient(180deg,#fdfefe,#f0f3f7);overflow:hidden;"><div class="t" style="left:9px;top:5.3px;font-size:9.6px;line-height:12px;color:#4a5878;">Все правила</div></div>
<div class="a" style="left:557px;top:260.5px;width:67.5px;height:23.5px;box-sizing:border-box;border:1px solid #d6dee8;border-radius:2px;background:linear-gradient(180deg,#fdfefe,#f0f3f7);"></div>
<div class="t" style="left:568.8px;top:266.60px;font-size:9.6px;line-height:12px;color:#4a5878;font-weight:normal;font-family:"Liberation Sans", sans-serif;">Добавить</div>
<div class="t" style="left:632.2px;top:266.10px;font-size:9.77px;line-height:13px;color:#222;font-weight:normal;font-family:"Liberation Sans", sans-serif;">Rules for use: 1. Add rules 2. Set the rules of the custom conditions 3. Vehicle authorization to the rules</div>
<div class="a" style="left:304px;top:288.3px;width:898px;height:1px;background:#dfe6ee;"></div>
<div class="a" style="left:303.5px;top:296px;width:898px;height:418px;box-sizing:border-box;border:1px solid #d6dbe1;background:#fff;"></div>
<div class="a" style="left:304.5px;top:317px;width:896px;height:1px;background:#e0e3e7;"></div>
<div class="a" style="left:433.8px;top:297px;width:1px;height:20px;background:#e2e5e9;"></div>
<div class="a" style="left:474.8px;top:297px;width:1px;height:20px;background:#e2e5e9;"></div>
<div class="a" style="left:605.2px;top:297px;width:1px;height:20px;background:#e2e5e9;"></div>
<div class="a" style="left:736px;top:297px;width:1px;height:20px;background:#e2e5e9;"></div>
<div class="th" style="left:298.6px;width:140px;">Оператор</div>
<div class="th" style="left:384.4px;width:140px;">Номер</div>
<div class="th" style="left:470.20000000000005px;width:140px;">Название правила</div>
<div class="th" style="left:600.6px;width:140px;">Subordinate Department</div>
<div class="a" style="left:304.5px;top:688.8px;width:896px;height:1px;background:#d3d9e0;"></div>
<div class="a" style="left:304.5px;top:689.8px;width:896px;height:23.2px;background:#f6f7f9;"></div>
<div class="pg" style="left:307.4px;">На стр.</div>
<div class="a" style="left:344px;top:695px;width:42.5px;height:15px;box-sizing:border-box;border:1px solid #555;background:#fff;box-shadow:inset 1px 1px 0 #999;"></div>
<div class="pg" style="left:347px;color:#111;">15</div>
<div class="a" style="left:370.5px;top:696.5px;width:14px;height:12px;box-sizing:border-box;border:1px solid #333;background:#fff;"></div>
<svg style="left:373.5px;top:700px" width="8" height="5" viewBox="0 0 8 5"><path d="M0.8 0.8 L4 4 L7.2 0.8" fill="none" stroke="#111" stroke-width="1.4"/></svg>
<div class="sep" style="left:395.8px;"></div>
<div class="sep" style="left:440px;"></div>
<div class="sep" style="left:588px;"></div>
<div class="sep" style="left:634px;"></div>
<div class="sep" style="left:663px;"></div>
<svg style="left:404px;top:696px" width="30" height="12" viewBox="0 0 30 12"><rect x="1.4" y="1" width="2" height="9.6" fill="#2a6fd6"/><path d="M9.6 1 V10.6 L3.8 5.8 Z" fill="#2a6fd6"/><path d="M26.4 1 V10.6 L21 5.8 Z" fill="#2a6fd6"/></svg>
<div class="pg" style="left:448.9px;">На</div>
<div class="a" style="left:466px;top:695px;width:35.5px;height:15px;box-sizing:border-box;border-top:1px solid #555;border-left:1px solid #555;border-bottom:1px solid #ddd;border-right:1px solid #ddd;background:#fff;"></div>
<div class="pg" style="left:468.5px;color:#111;">1</div>
<div class="pg" style="left:508.4px;">стр.</div>
<div class="pg" style="left:531.4px;">Всего 1стр.</div>
<svg style="left:598px;top:696px" width="30" height="12" viewBox="0 0 30 12"><path d="M2 1 V10.6 L7.6 5.8 Z" fill="#2a6fd6"/><path d="M17.4 1 V10.6 L23 5.8 Z" fill="#2a6fd6"/><rect x="23.6" y="1" width="2" height="9.6" fill="#2a6fd6"/></svg>
<svg style="left:641.5px;top:695px" width="15" height="14" viewBox="0 0 15 14"><g fill="none" stroke="#56b35a" stroke-width="2.4" stroke-linecap="round"><path d="M2.6 5.6 Q4.4 2.2 8.4 2.6 Q10.4 3 11.4 4.2"/><path d="M12.4 8.4 Q10.6 11.8 6.6 11.4 Q4.6 11 3.6 9.8"/></g><path d="M9.4 5.8 L13.8 5.6 L13 1.4 Z" fill="#56b35a"/><path d="M5.6 8.2 L1.2 8.4 L2 12.6 Z" fill="#56b35a"/></svg>
<div class="pg" style="left:669.4px;">Нет записей</div>
<div class="a" style="left:303.5px;top:714px;width:898px;height:6px;box-sizing:border-box;background:#fff;border-left:1px solid #e0e4e9;border-right:1px solid #e0e4e9;border-bottom:1px solid #d9dee4;"></div>
<div class="a" style="left:745.5px;top:715px;width:15.5px;height:3.4px;background:#cfd2d6;border-radius:1px;"></div>
<div class="a" style="left:68px;top:726.5px;width:1164px;height:18.5px;background:linear-gradient(180deg,#b8b8b8 0%,#dddddd 8%,#dadada 35%,#cdcdcd 75%,#c2c2c2 100%);"></div>
<div class="st" style="left:104px;">Пробег: 00:01:19</div>
<div class="st" style="left:188px;color:#e8232b;">Количество ошибок диска:0</div>
<div class="st" style="left:318px;color:#e8232b;">No Record:0</div>
<div class="st" style="left:380.8px;">Состояние сети:0 / Количество потерь:0 / Обслуживание:0 / Stop Using:0 / Всего:1</div>
<div class="st" style="left:732.6px;">Online Rate:0.00% / Соотношение потерь:0.00%</div>
<div class="a" style="left:0;top:761px;width:1300px;height:38px;background:linear-gradient(180deg,#b0c8e2 0%,#7893b4 3.5%,#5d7fa5 10%,#486f98 25%,#375c84 40%,#2b4b6e 52%,#32577e 62%,#3a648f 75%,#3b6692 100%);"></div>
<div class="a" style="left:209px;top:761px;width:62px;height:38px;background:#9aa0a6;"></div>
<div class="a" style="left:210px;top:762px;width:29.5px;height:18.5px;background:linear-gradient(180deg,#dcdcdc,#cccccc);text-align:center;font-size:10.5px;line-height:18px;color:#111;-webkit-text-stroke:0.3px #111;font-family:'DejaVu Sans',sans-serif;">1</div>
<div class="a" style="left:241px;top:762px;width:29.5px;height:18.5px;background:linear-gradient(180deg,#dcdcdc,#cccccc);text-align:center;font-size:10.5px;line-height:18px;color:#111;-webkit-text-stroke:0.3px #111;font-family:'DejaVu Sans',sans-serif;">2</div>
<div class="a" style="left:210px;top:781.5px;width:29.5px;height:18.5px;background:linear-gradient(180deg,#dcdcdc,#cccccc);text-align:center;font-size:10.5px;line-height:18px;color:#111;-webkit-text-stroke:0.3px #111;font-family:'DejaVu Sans',sans-serif;">3</div>
<div class="a" style="left:241px;top:781.5px;width:29.5px;height:18.5px;background:#ffffff;text-align:center;font-size:10.5px;line-height:18px;color:#111;-webkit-text-stroke:0.3px #111;font-family:'DejaVu Sans',sans-serif;">4</div>
<div class="t" style="left:1223.2px;top:767.40px;font-size:20.4px;line-height:24px;color:#fff;font-weight:normal;font-family:"Liberation Sans", sans-serif;">12:34</div>
<div class="a" style="left:1285.5px;top:761px;width:14.5px;height:38px;background:linear-gradient(180deg,#f2f4f6,#e4e8ec);"></div>
<svg style="left:1291px;top:778.5px" width="6" height="9" viewBox="0 0 6 9"><path d="M0.6 0.4 L5.4 4.4 L0.6 8.4 Z" fill="#333"/></svg>
<svg style="left:6.5px;top:768.5px" width="22" height="22.5" viewBox="0 0 23 25">
<rect x="0.5" y="0.5" width="22" height="24" rx="2" fill="#4f8ee0" stroke="#a8c8f0" stroke-width="1"/>
<rect x="2" y="2" width="19" height="21" rx="1.5" fill="#2f6fd0"/>
<circle cx="11.5" cy="12.5" r="7.2" fill="none" stroke="#eaf2ff" stroke-width="3" stroke-dasharray="2.6 1.9"/>
<circle cx="11.5" cy="12.5" r="5" fill="#dfeaff"/><path d="M9 8 v6 q0 2.4 2.5 2.4 q2.5 0 2.5 -2.4 v-6" fill="none" stroke="#2f6fd0" stroke-width="1.6"/>
</svg>
<svg style="left:42px;top:768.5px" width="20.4" height="22.44" viewBox="0 0 20 22">
<path d="M3.4 10 H16.6 V19.6 Q10 22 3.4 19.6 Z" fill="#f1eee6"/>
<path d="M3.4 10 H10 V21 Q6 20.8 3.4 19.6 Z" fill="#ffffff"/>
<path d="M10 0.3 L19.8 10.6 Q18.6 12.4 16.8 11.8 L10 6.4 L3.2 11.8 Q1.4 12.4 0.2 10.6 Z" fill="#ee5a14"/>
<path d="M10 0.6 L17 8 L10 3.6 L3 8 Z" fill="#fa8c3c"/>
<path d="M10 6.2 L15.6 10.8 H4.4 Z" fill="#f6f3ec"/>
<rect x="8.1" y="13.2" width="3.8" height="7.6" rx=".8" fill="#b45a1e"/>
<rect x="7.8" y="9.4" width="4.4" height="2.4" rx=".6" fill="#6e4630"/>
</svg>
<svg style="left:74.5px;top:769px" width="22.799999999999997" height="20.9" viewBox="0 0 24 22">
<path d="M12 0 L14 5 L20 2.5 L18.5 8 L24 11 L18.5 13 L20.5 19 L14.5 16.5 L12 22 L9.5 16.5 L3 19.5 L5.5 13 L0 10 L5.5 8 L3 1.5 L9.5 5 Z" fill="#f2f6fb" stroke="#c6d2e2" stroke-width=".5"/>
<circle cx="12" cy="10.5" r="6" fill="#2a6ae0"/>
<path d="M7.5 8 Q10 6 12 8 Q11 11 8.5 11.5 Z M13 9 Q16 8 17 10.5 Q16 14 13.5 14.5 Q12.5 12 13 9 Z" fill="#e8f0ff"/>
</svg>
<svg style="left:117px;top:766.5px" width="14" height="13" viewBox="0 0 14 13"><path d="M1 8 L7 4 L10 9 L4 12.5 Z" fill="#dfe8ff"/><path d="M2 8.5 L7 5.5 L9 9 L4 11.5 Z" fill="#7a8ae8"/><path d="M7 5 L12.5 0.5 L13.5 2 L8.5 7 Z" fill="#e8c820"/></svg>
<svg style="left:135.5px;top:766px" width="12.8" height="14.08" viewBox="0 0 20 22">
<path d="M3.4 10 H16.6 V19.6 Q10 22 3.4 19.6 Z" fill="#f1eee6"/>
<path d="M3.4 10 H10 V21 Q6 20.8 3.4 19.6 Z" fill="#ffffff"/>
<path d="M10 0.3 L19.8 10.6 Q18.6 12.4 16.8 11.8 L10 6.4 L3.2 11.8 Q1.4 12.4 0.2 10.6 Z" fill="#ee5a14"/>
<path d="M10 0.6 L17 8 L10 3.6 L3 8 Z" fill="#fa8c3c"/>
<path d="M10 6.2 L15.6 10.8 H4.4 Z" fill="#f6f3ec"/>
<rect x="8.1" y="13.2" width="3.8" height="7.6" rx=".8" fill="#b45a1e"/>
<rect x="7.8" y="9.4" width="4.4" height="2.4" rx=".6" fill="#6e4630"/>
</svg>
<svg style="left:152.5px;top:766px" width="14" height="14" viewBox="0 0 14 14"><rect x="0.8" y="1" width="12.4" height="9" rx="1" fill="#e9edf2"/><rect x="2" y="2.2" width="10" height="6.6" fill="#23272c"/><rect x="5" y="10" width="4" height="1.6" fill="#cfd5dc"/><rect x="3" y="11.4" width="8" height="1.6" rx=".6" fill="#e9edf2"/></svg>
<svg style="left:171px;top:766.5px" width="14" height="13" viewBox="0 0 14 13"><path d="M1 8 L7 4 L10 9 L4 12.5 Z" fill="#dfe8ff"/><path d="M2 8.5 L7 5.5 L9 9 L4 11.5 Z" fill="#7a8ae8"/><path d="M7 5 L12.5 0.5 L13.5 2 L8.5 7 Z" fill="#e8c820"/></svg>
<svg style="left:118px;top:784.5px" width="14" height="13" viewBox="0 0 14 13"><path d="M1 8 L7 4 L10 9 L4 12.5 Z" fill="#dfe8ff"/><path d="M2 8.5 L7 5.5 L9 9 L4 11.5 Z" fill="#7a8ae8"/><path d="M7 5 L12.5 0.5 L13.5 2 L8.5 7 Z" fill="#e8c820"/></svg>
<svg style="left:134.5px;top:784px" width="14" height="14" viewBox="0 0 14 14"><rect x="0.6" y="0.8" width="10" height="8" rx="1" fill="#dfe8f6"/><rect x="1.8" y="2" width="7.6" height="5.4" fill="#2a6ad8"/><rect x="6" y="5" width="7.4" height="8" rx="1" fill="#e6eef8"/><path d="M8 9 h4 l-2 3 Z" fill="#36b24a"/><rect x="3" y="9.2" width="4" height="1.4" fill="#cfd8e6"/></svg>
<svg style="left:152.3px;top:784.5px" width="14" height="14" viewBox="0 0 14 14"><circle cx="7" cy="7" r="5" fill="none" stroke="#e8283a" stroke-width="3.2"/><circle cx="7" cy="7" r="5" fill="none" stroke="#fff" stroke-width="3.2" stroke-dasharray="3.4 4.45" stroke-dashoffset="1.7"/></svg>
</body></html>
